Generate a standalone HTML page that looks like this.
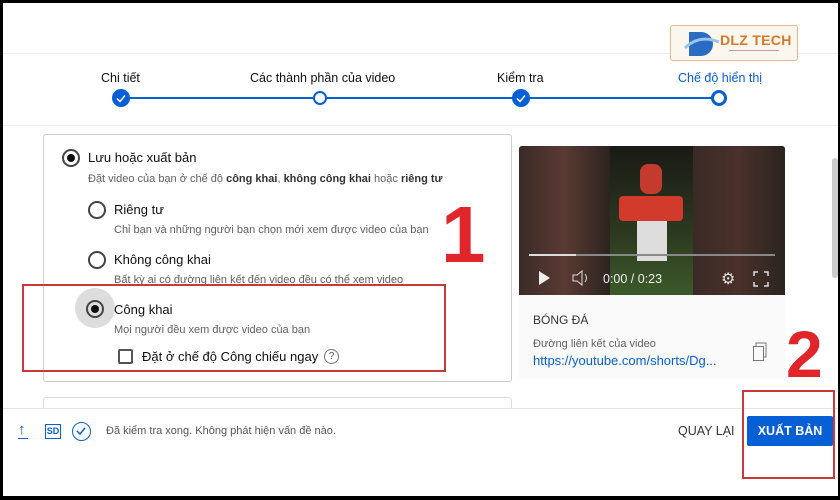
<!DOCTYPE html>
<html><head><meta charset="utf-8"><style>
*{margin:0;padding:0;box-sizing:border-box}
body{width:840px;height:500px;background:#000;position:relative;overflow:hidden;font-family:"Liberation Sans",sans-serif;color:#0f0f0f}
#pg{position:absolute;left:3px;top:3px;width:835px;height:493px;background:#fff;overflow:hidden}
.a{position:absolute}
.lbl{font-size:12.5px;color:#0f0f0f;top:68px;white-space:nowrap}
.dot{width:18px;height:18px;border-radius:50%;background:#065fd4;top:86px}
.ring{width:16px;height:16px;border-radius:50%;border:3px solid #065fd4;background:#fff;top:87px}
.rad{width:18px;height:18px;border-radius:50%;border:2px solid #444}
.rad.on::after{content:"";position:absolute;left:3px;top:3px;width:8px;height:8px;border-radius:50%;background:#0f0f0f}
.t{font-size:13px;white-space:nowrap}
.s{font-size:11px;color:#606060;white-space:nowrap}
</style></head><body><div id="pg">
<div class="a" style="left:0;top:50px;width:835px;height:1px;background:#eee"></div>
<div class="a" style="left:0;top:122px;width:835px;height:1px;background:#eee"></div>
<!-- logo -->
<div class="a" style="left:667px;top:22px;width:128px;height:36px;border:1px solid #e9b98a;border-radius:3px;background:#fbf6ee"></div>
<svg class="a" style="left:680px;top:25px" width="40" height="32"><path d="M6 4h12a12 12 0 0 1 0 24H6z" fill="#2a6bc4"/><path d="M2 20q14 -14 34 -6" stroke="#9ec2ea" stroke-width="3" fill="none"/></svg>
<div class="a" style="left:717px;top:29px;font-weight:bold;font-size:14px;color:#d4782a;letter-spacing:0.3px">DLZ TECH</div>
<div class="a" style="left:726px;top:47px;width:50px;height:1px;background:#c9a"></div>
<!-- stepper -->
<div class="a lbl" style="left:98px">Chi tiết</div>
<div class="a lbl" style="left:247px">Các thành phần của video</div>
<div class="a lbl" style="left:494px">Kiểm tra</div>
<div class="a lbl" style="left:675px;color:#065fd4">Chế độ hiển thị</div>
<div class="a" style="left:118px;top:94px;width:600px;height:2px;background:#065fd4"></div>
<div class="a dot" style="left:109px"><svg width="18" height="18"><path d="M5 9.5l3 3 5-6" stroke="#fff" stroke-width="1.5" fill="none"/></svg></div>
<div class="a ring" style="left:310px;width:14px;height:14px;top:88px;border-width:2.5px"></div>
<div class="a dot" style="left:509px"><svg width="18" height="18"><path d="M5 9.5l3 3 5-6" stroke="#fff" stroke-width="1.5" fill="none"/></svg></div>
<div class="a ring" style="left:708px"></div>
<!-- second card -->
<div class="a" style="left:40px;top:394px;width:469px;height:40px;border:1px solid #ddd;border-radius:3px"></div>
<!-- footer bg -->
<div class="a" style="left:0;top:405px;width:835px;height:90px;background:#fff;border-top:1px solid #e5e5e5"></div>
<!-- card -->
<div class="a" style="left:40px;top:131px;width:469px;height:248px;border:1px solid #ccc;border-radius:3px"></div>
<div class="a rad on" style="left:59px;top:146px"></div>
<div class="a t" style="left:85px;top:147px">Lưu hoặc xuất bản</div>
<div class="a s" style="left:85px;top:170px">Đặt video của bạn ở chế độ <b style="color:#333">công khai</b>, <b style="color:#333">không công khai</b> hoặc <b style="color:#333">riêng tư</b></div>
<div class="a rad" style="left:85px;top:198px"></div>
<div class="a t" style="left:111px;top:199px">Riêng tư</div>
<div class="a s" style="left:111px;top:221px">Chỉ bạn và những người bạn chọn mới xem được video của bạn</div>
<div class="a rad" style="left:85px;top:248px"></div>
<div class="a t" style="left:111px;top:249px">Không công khai</div>
<div class="a s" style="left:111px;top:271px">Bất kỳ ai có đường liên kết đến video đều có thể xem video</div>
<div class="a" style="left:72px;top:285px;width:40px;height:40px;border-radius:50%;background:#ddd"></div>
<div class="a rad on" style="left:83px;top:297px"></div>
<div class="a t" style="left:111px;top:299px">Công khai</div>
<div class="a s" style="left:111px;top:321px">Mọi người đều xem được video của bạn</div>
<div class="a" style="left:115px;top:346px;width:15px;height:15px;border:2px solid #555;border-radius:2px"></div>
<div class="a t" style="left:139px;top:346px">Đặt ở chế độ Công chiếu ngay</div>
<div class="a" style="left:321px;top:346px;width:15px;height:15px;border:1px solid #777;border-radius:50%;font-size:10px;text-align:center;line-height:13px;color:#555">?</div>
<div class="a" style="left:19px;top:281px;width:424px;height:88px;border:2px solid #c8393c"></div>
<div class="a" style="left:438px;top:192px;font-size:80px;font-weight:bold;color:#e0252b;line-height:1">1</div>
<!-- video -->
<div class="a" style="left:516px;top:143px;width:266px;height:149px;background:#2a2623;border-radius:3px 3px 0 0;overflow:hidden">
<div class="a" style="left:0;top:0;width:91px;height:149px;background:linear-gradient(90deg,#3a2b27,#5a3a33,#2b2420)"></div>
<div class="a" style="left:174px;top:0;width:92px;height:149px;background:linear-gradient(90deg,#3a2a26,#4a302a,#2b2420)"></div>
<div class="a" style="left:91px;top:0;width:83px;height:149px;background:linear-gradient(#1a1a16,#2c3a20 60%,#3d5a2a)"></div>
<div class="a" style="left:121px;top:18px;width:22px;height:30px;border-radius:8px;background:#c33a2e"></div>
<div class="a" style="left:100px;top:50px;width:64px;height:25px;border-radius:4px;background:#d23a2c"></div>
<div class="a" style="left:118px;top:75px;width:30px;height:40px;background:#ddd"></div>
<div class="a" style="left:10px;top:108px;width:246px;height:2px;background:#888"></div>
<div class="a" style="left:10px;top:108px;width:47px;height:2px;background:#ddd"></div>
<svg class="a" style="left:18px;top:124px" width="14" height="16"><path d="M2 1l11 7-11 7z" fill="#eee"/></svg>
<svg class="a" style="left:52px;top:124px" width="20" height="16"><path d="M2 5h4l5-4v14l-5-4H2z" stroke="#ddd" fill="none"/><path d="M14 4q3 4 0 8" stroke="#ddd" fill="none"/></svg>
<div class="a" style="left:84px;top:126px;color:#eee;font-size:12.5px">0:00 / 0:23</div>
<div class="a" style="left:202px;top:123px;color:#ddd;font-size:16px">⚙</div>
<svg class="a" style="left:234px;top:125px" width="16" height="16"><path d="M1 5V1h4M11 1h4v4M15 11v4h-4M5 15H1v-4" stroke="#ddd" fill="none" stroke-width="1.5"/></svg>
</div>
<div class="a" style="left:516px;top:292px;width:266px;height:84px;background:#f9f9f9"></div>
<div class="a" style="left:530px;top:310px;font-size:12px;color:#333">BÓNG ĐÁ</div>
<div class="a" style="left:530px;top:335px;font-size:11px;color:#606060">Đường liên kết của video</div>
<div class="a" style="left:530px;top:350px;font-size:13px;color:#065fd4">https://youtube.com/shorts/Dg...</div>
<svg class="a" style="left:749px;top:339px" width="18" height="20"><path d="M4 4V1h10v14h-3" stroke="#777" fill="none"/><rect x="1.5" y="4.5" width="10" height="14" stroke="#777" fill="none"/></svg>
<div class="a" style="left:783px;top:318px;font-size:66px;font-weight:bold;color:#e0252b;line-height:1">2</div>
<!-- scrollbar -->
<div class="a" style="left:829px;top:155px;width:6px;height:120px;border-radius:3px;background:#ccc"></div>
<!-- footer -->
<div class="a" style="left:15px;top:418px;font-size:15px;color:#065fd4">↑</div>
<div class="a" style="left:15px;top:435px;width:10px;height:1px;background:#065fd4"></div>
<div class="a" style="left:42px;top:421px;width:16px;height:15px;border:1.5px solid #065fd4;font-size:9px;font-weight:bold;color:#065fd4;text-align:center;line-height:12px">SD</div>
<div class="a" style="left:69px;top:419px;width:19px;height:19px;border:1.5px solid #065fd4;border-radius:50%"><svg width="16" height="16"><path d="M4 8l3 3 5-6" stroke="#065fd4" stroke-width="1.5" fill="none"/></svg></div>
<div class="a" style="left:103px;top:422px;font-size:11px;color:#555">Đã kiểm tra xong. Không phát hiện vấn đề nào.</div>
<div class="a" style="left:675px;top:421px;font-size:12.5px;color:#333">QUAY LẠI</div>
<div class="a" style="left:744px;top:413px;width:86px;height:30px;background:#065fd4;border-radius:2px;color:#fff;font-size:12.5px;font-weight:bold;text-align:center;line-height:30px">XUẤT BẢN</div>
<div class="a" style="left:739px;top:387px;width:93px;height:89px;border:2px solid #c8393c"></div>
</div></body></html>
